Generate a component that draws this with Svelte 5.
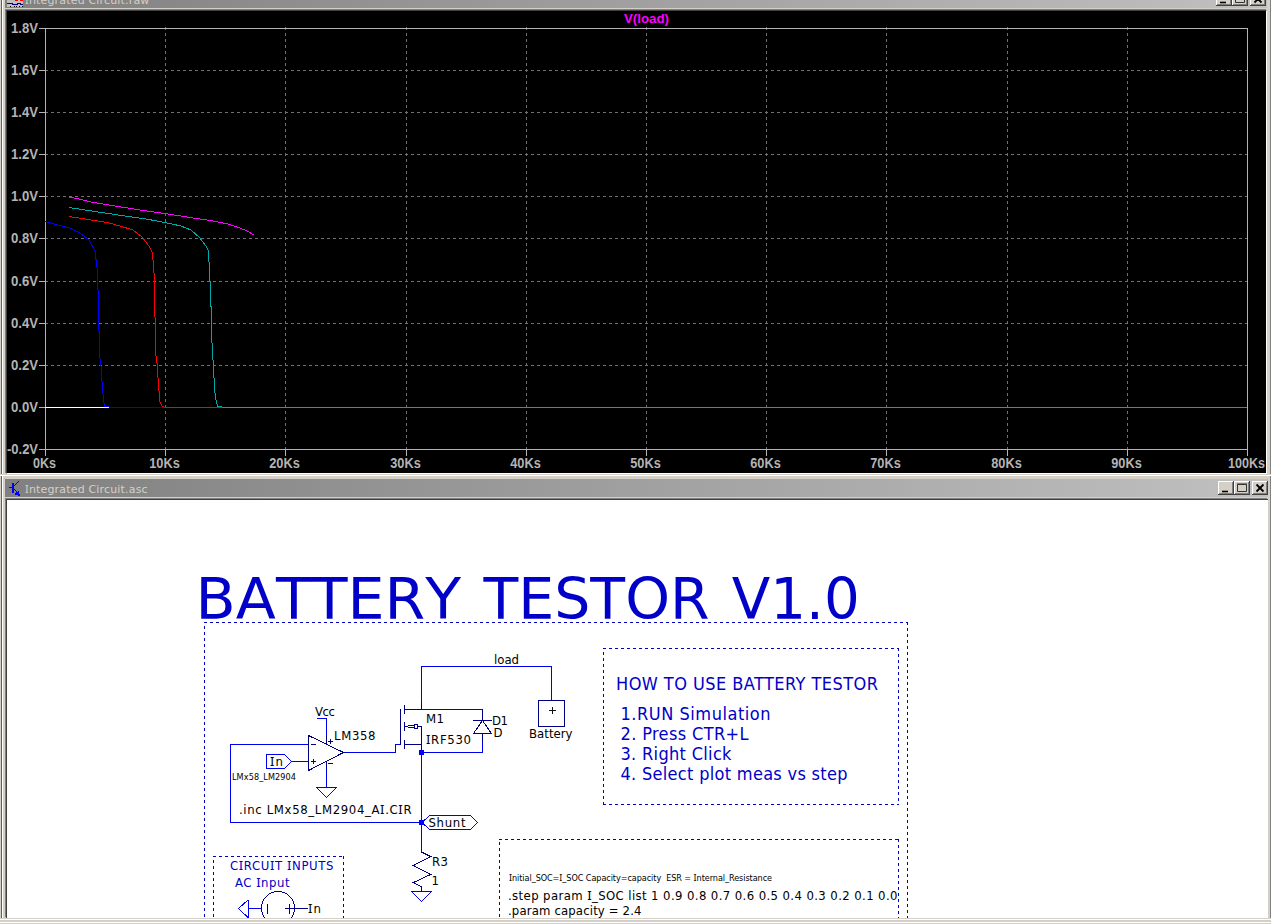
<script>
  const xt = [0, 10, 20, 30, 40, 50, 60, 70, 80, 90, 100];
  const gx = [45, 165, 285, 406, 526, 646, 766, 886, 1007, 1127, 1247];
  const gy = [28, 70, 112, 154, 196, 238, 281, 323, 365, 407, 449];
  const yt = ['1.8V', '1.6V', '1.4V', '1.2V', '1.0V', '0.8V', '0.6V', '0.4V', '0.2V', '0.0V', '-0.2V'];
  const B = '#0000c8';
  // text, x, baseline, width, font size, colour
  const labels = [
    ['HOW TO USE BATTERY TESTOR', 616, 690, 262, 18, B],
    ['1.RUN Simulation', 620.5, 720, 150, 18, B],
    ['2. Press CTR+L', 620.5, 740, 128, 18, B],
    ['3. Right Click', 620.5, 760, 111, 18, B],
    ['4. Select plot meas vs step', 620.5, 780, 227, 18, B],
    ['CIRCUIT INPUTS', 230, 870, 103.5, 13, B],
    ['AC Input', 235, 887, 54.5, 13, B],
    ['load', 494, 664, 25, 13],
    ['Vcc', 315, 716, 20, 13],
    ['LM358', 334, 740, 41.5, 13],
    ['In', 270, 766, 13, 13],
    ['LMx58_LM2904', 232, 780, 64, 9],
    ['.inc LMx58_LM2904_AI.CIR', 239, 814, 172.5, 13],
    ['M1', 426, 723, 18, 13],
    ['IRF530', 426, 744, 45, 13],
    ['D1', 492, 725, 16, 13],
    ['D', 493.5, 737, 9, 13],
    ['Battery', 529, 738, 43.5, 13],
    ['Shunt', 428.5, 827, 37, 13],
    ['R3', 432, 866, 16, 13],
    ['1', 431.5, 885, 7, 13],
    ['In', 308, 913, 13, 13],
    ['Initial_SOC=I_SOC Capacity=capacity  ESR = Internal_Resistance', 509, 881, 263, 9],
    ['.step param I_SOC list 1 0.9 0.8 0.7 0.6 0.5 0.4 0.3 0.2 0.1 0.0', 508, 900, 389.5, 13],
    ['.param capacity = 2.4', 508, 915, 133.5, 13]
  ];
  // word, x, width
  const title = [['BATTERY', 195.6, 265.5], ['TESTOR', 483.5, 226], ['V1.0', 731.8, 128]];
  const parts = (s) => s.split(/(I)/).filter(Boolean);
</script>

{#snippet caption(s)}{#each parts(s) as p}{#if p === 'I'}<span class="si">I</span>{:else}{p}{/if}{/each}{/snippet}
{#snippet buttons()}
  <div class="btns">
    <div class="btn"><svg width="16" height="14"><path d="M4 10.5h6" stroke="#000" stroke-width="1.6" /></svg></div>
    <div class="btn"><svg width="16" height="14"><path d="M3.5 3.5h9v7h-9zM3 3h10" stroke="#333" fill="none" /></svg></div>
    <div class="btn close"><svg width="16" height="14"><path d="M4.5 3.5l7 7M11.5 3.5l-7 7" stroke="#000" stroke-width="1.8" /></svg></div>
  </div>
{/snippet}

<main>
  <section class="win plot">
    <header class="bar">
      <svg class="ico" width="16" height="16" shape-rendering="crispEdges"><path fill="#c0c0c0" d="M0 0h16v16H0z" /><path fill="#f00" d="M8 9h3v1h-3zM13 9h3v1h-3z" /><path d="M0 12.5h5v1h5v-1h3v1h3" stroke="#000080" fill="none" /><path d="M3 15.5h1M7 15.5h1M9 15.5h1M12 15.5h1M15 15.5h1" stroke="#000" /></svg>
      <span>{@render caption('Integrated Circuit.raw')}</span>
      {@render buttons()}
    </header>
    <div class="body dark">
      <svg width="1259" height="462" viewBox="7 11 1259 462" shape-rendering="crispEdges">
        <g stroke="#707070" stroke-dasharray="3 3">
          {#each gx.slice(1, -1) as x}<path d="M{x + 0.5} 27V449" />{/each}
          {#each gy.slice(1, -2) as y}<path d="M45 {y + 0.5}H1247" />{/each}
        </g>
        <g stroke="#b4b4b4" fill="none">
          <path d="M45.5 28.5H1247.5V449.5H45.5z" />
          {#each gx as x}<path d="M{x + 0.5} 449V456" />{/each}
          {#each gy as y}<path d="M39 {y + 0.5}H45" />{/each}
        </g>
        <g fill="none">
          <path stroke="#00a8a8" d="M222 407.5H1247M69 207.5L85 210L105 213L125 216L146 219L165 222.5L181 226L191 230L200 238L206 246L208.5 251L209.5 272L210.5 289L211.5 323V330L212.5 355L213.5 365L214.5 390L216.5 403L218 406.5H222" />
          <path stroke="#f00" d="M164 407.5H222M69 216.5L85 219L107 222.5L120 226L133 230L142 237L149 246L152.5 253L154.5 280V310L155.5 323V352L157 363L158.5 385L160 402L162 406L164 407.5" />
          <path stroke="#00f" d="M109 407.5H164M45 221.5L58 225L71 228.5L80 233L89 240L95 251L97.5 272V288L98.5 292V329L99.5 333V355L101 366L102.5 390L104 403L105 406.5H109" />
          <path stroke="#f0f" d="M69 197.5H72L83 200L91 202L115 206L140 210L165 213.5L190 217.5L210 220.5L228 224L240 228L247 231L254 235" />
          <path stroke="#fff" d="M45 407.5H109" />
        </g>
        <g class="axis">
          {#each yt as t, i}<text x="38" y={gy[i] + 5} text-anchor="end" textLength={t.length === 5 ? 31 : 27} lengthAdjust="spacingAndGlyphs">{t}</text>{/each}
          {#each xt as t, i}<text x={gx[i] - 0.5} y="468" text-anchor="middle" textLength={[23, 30.5, 37][String(t).length - 1]} lengthAdjust="spacingAndGlyphs">{t}Ks</text>{/each}
          <text x="624" y="23" textLength="45" lengthAdjust="spacingAndGlyphs">V(load)</text>
        </g>
      </svg>
    </div>
  </section>

  <section class="win sheet">
    <header class="bar">
      <svg class="ico" width="16" height="16" shape-rendering="crispEdges"><path d="M2 7.5h4M7 6l5-5M7 9l4 4" stroke="#00f" fill="none" /><path d="M5 3h2v10H5zM8 13l4-2v3h1v2h-2v-1H8z" fill="#00f" /></svg>
      <span>{@render caption('Integrated Circuit.asc')}</span>
      {@render buttons()}
    </header>
    <div class="body white">
      <svg width="1261" height="418" viewBox="7 500 1261 418">
        <g stroke="#0000c0" fill="none" stroke-dasharray="3 3" shape-rendering="crispEdges">
          <path d="M204 622.5H908M204.5 626V918M907.5 622V918" />
          <path d="M603 648.5H899M603.5 652V804M898.5 648V804M603 804.5H899" />
          <path d="M213 856.5H344M213.5 860V918M343.5 856V918" />
          <path d="M499 839.5H899M499.5 842V918M898.5 839V918" />
        </g>
        <g stroke="#0000f0" fill="none" shape-rendering="crispEdges">
          <path d="M421.5 709V666.5H551.5V700M421.5 709.5H482.5V714M482.5 740V752.5H421.5V853M421.5 822.5H230.5V744.5H308M344 752.5H395.5V744.5H401M317 718.5H326.5V742M291 761.5H308M326.5 766V787" />
          <path d="M316.5 787.5H336.5L326.5 797.5zM411.5 891.5H431.5L421.5 901.5z" />
          <path d="M266.5 754.5H284.5L291.5 761.5L284.5 768.5H266.5z" />
          <path d="M422 822.5L429.5 815.5H470.5L477.5 822.5L470.5 829.5H429.5z" />
          <path d="M248.5 899.5V918L238.5 908.5L248.5 899.5M249 908.5H261M302 908.5H308" />
        </g>
        <g stroke="#000080" fill="none" shape-rendering="crispEdges">
          <path d="M308.5 735.5V770.5L343.5 752.5zM311 744.5H316M311 761.5H316M313.5 759V764M328 741.5H333M330.5 739V744M328 763.5H333M326.5 736V744M326.5 761V770" />
          <path d="M400.5 709V745M404.5 705V714M404.5 722V731M404.5 740V749M404 709.5H422M404 726.5H408M417 726.5H421.5V752M404 744.5H422M421.5 702V709M408 725.5H414M408 727.5H414M414.5 724.5H417.5V728.5H414.5z" />
          <path d="M473 720.5H492M482.5 720.5L491.5 733.5H473.5zM482.5 710V720M482.5 733V742" />
          <path d="M538.5 700.5H564.5V726.5H538.5z" />
          <path d="M549 710.5H556M552.5 707V714" stroke="#111" />
          <path d="M421.5 852L430.5 856.5L413.5 865.5L430.5 874.5L413.5 882.5L421.5 887V891" />
          <circle cx="278" cy="908" r="16.5" />
          <path d="M267.5 904V914M285 908.5H308M289.5 904V914" />
        </g>
        <path fill="#00f" d="M419 750h5v5h-5zM419 820h5v5h-5z" />
        {#each title as [word, x, w]}
          <text class="title" {x} y="619" textLength={w} lengthAdjust="spacingAndGlyphs">{word}</text>
        {/each}
        {#each labels as [s, x, y, w, size, color]}
          <text {x} {y} font-size={size} textLength={w} fill={color ?? '#000'} class="lbl">{#each parts(s) as p}{#if p === 'I'}<tspan class="si">I</tspan>{:else}{p}{/if}{/each}</text>
        {/each}
      </svg>
    </div>
    <div class="foot"></div>
  </section>
</main>

<style>
  :global(body) { margin: 0; overflow: hidden; background: #d4d0c8; }
  main { width: 1271px; height: 924px; display: flex; flex-direction: column; overflow: hidden; background: #d4d0c8; }
  .win { flex: none; box-sizing: border-box; display: flex; flex-direction: column; padding: 0 3px 0 5px; box-shadow: inset 1px 0 #d4d0c8, inset 2px 0 #606060, inset 3px 0 #fff, inset -1px 0 #808080; }
  .plot { height: 475px; justify-content: flex-end; padding-right: 4px; border-bottom: 1px solid #d4d0c8; }
  .sheet { height: 449px; padding-top: 3px; border-top: 1px solid #fff; }
  .bar { flex: none; height: 18px; display: flex; align-items: center; color: #d4d0c8; background: linear-gradient(90deg, #808080, #c0c0c0); font: 11px "DejaVu Sans", sans-serif; margin-bottom: 2px; }
  .plot .btns { margin-right: 1px; }
  .bar > span { flex: 1; padding-top: 2px; letter-spacing: 0.17px; white-space: pre; }
  .ico { margin: 0 2px; }
  .si { font-family: "Noto Sans", sans-serif; line-height: 1; }
  .btns { display: flex; }
  .btn { box-sizing: border-box; width: 16px; height: 14px; background: #d4d0c8; box-shadow: inset -1px -1px #404040, inset 1px 1px #fff, inset -2px -2px #808080; }
  .close { margin-left: 2px; }
  .btn svg, .body svg { display: block; }
  .body { flex: none; border-top: 1px solid #404040; border-left: 1px solid #404040; margin-left: 1px; box-shadow: -1px -1px #808080; overflow: hidden; }
  .dark { background: #000; border-bottom: 1px solid #fff; border-right: 1px solid #fff; }
  .white { background: #fff; }
  .foot { flex: none; height: 6px; background: linear-gradient(#d4d0c8 1px, #fff 1px 2px, #d4d0c8 2px 4px, #fff 4px 5px, #d4d0c8 5px); margin: 0 -3px 0 -5px; }
  .axis text { font: bold 14px "Liberation Sans", Arial, sans-serif; fill: #b4b4b4; }
  .axis text:last-child { fill: #f0f; font-size: 13px; }
  .title { font: 57.5px "DejaVu Sans", sans-serif; font-kerning: none; fill: #0000c8; }
  .lbl { font-family: "DejaVu Sans Condensed", "DejaVu Sans", sans-serif; font-stretch: condensed; white-space: pre; }
</style>
